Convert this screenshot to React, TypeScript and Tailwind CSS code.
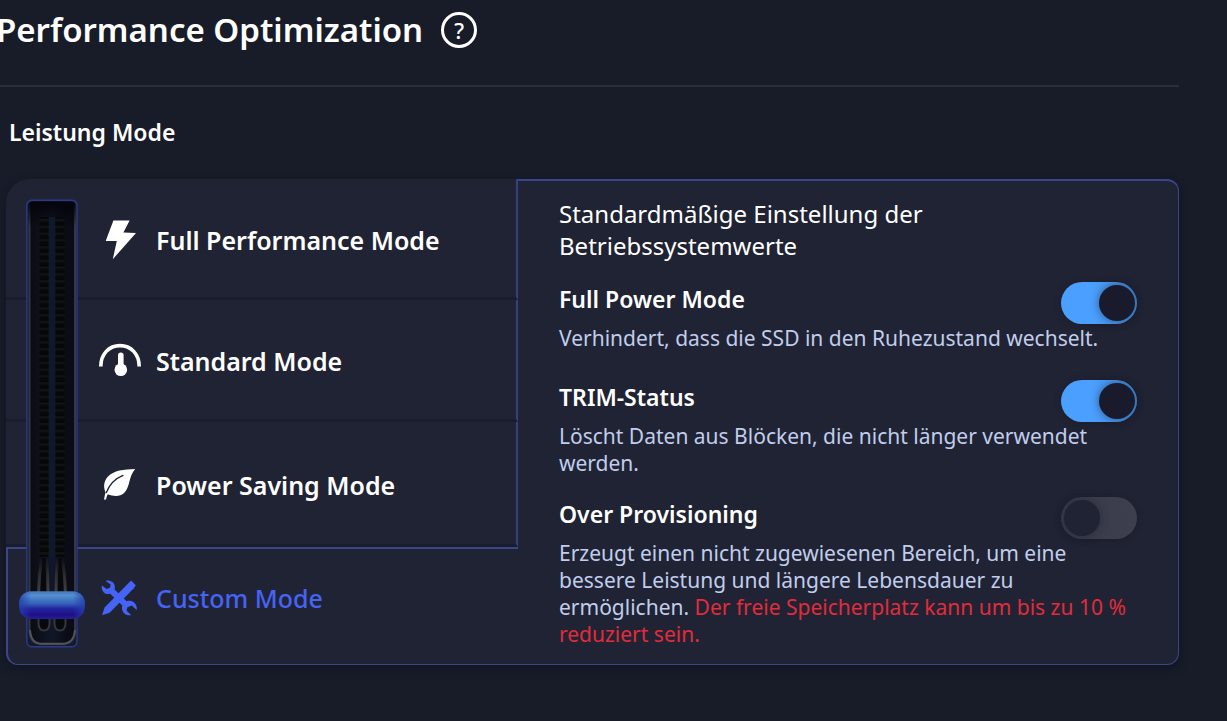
import { useState, type ReactNode } from "react";

function BoltIcon() {
  return (
    <svg viewBox="99 220 42 42" className="size-[42px] shrink-0" fill="currentColor" aria-hidden="true">
      <path d="M113.4 221.5H129.6L123.4 233.4L136 234L112.8 260.2L116.8 242H105.7Z" />
    </svg>
  );
}

function GaugeIcon() {
  return (
    <svg viewBox="99 342 42 42" className="size-[42px] shrink-0" aria-hidden="true">
      <path d="M100.8 368.6C100.8 356 109 347.6 120 347.6S139.2 356 139.2 368.6" fill="none" stroke="currentColor" strokeWidth="3.6" />
      <path d="M120.8 357.4V371" stroke="currentColor" strokeWidth="5.6" strokeLinecap="round" />
      <circle cx="120.8" cy="371.8" r="6.3" fill="currentColor" />
    </svg>
  );
}

function LeafIcon() {
  return (
    <svg viewBox="99 463 42 42" className="size-[42px] shrink-0" aria-hidden="true">
      <path
        d="M135.2 468C124 468.2 113.5 469.6 108 475.6C103.6 480.4 103.2 486 105.6 491.4C104.8 493.8 104.2 496.4 104.2 498.8L106 498.6C106.3 496.6 106.9 495 107.8 493.2C114.5 496 121.5 495.4 125 491C130.4 484.4 128.4 476 135.2 468Z"
        fill="currentColor"
      />
      <path d="M106.4 491.6C109.4 483.6 115.2 477.6 123 474.4" fill="none" stroke="#202333" strokeWidth="1.3" strokeLinecap="round" />
    </svg>
  );
}

function ToolsIcon() {
  return (
    <svg viewBox="98 576 44 44" className="-mx-px size-11 shrink-0" fill="currentColor" aria-hidden="true">
      <path d="M105.6 580.9C109.6 579.6 114.3 582 114.8 586.2C115 587.6 114.8 588.6 114.6 589.5L126.6 601.3C131 599.6 136 602.6 136.7 607.3C136.9 608.3 136.8 609.2 136.6 610L131.8 605.6L127.4 607.2L126.6 610.8L131.2 615C126.6 616.2 122 613 122 608.2C122 607.2 122.1 606.4 122.3 605.5L110.2 593.8C106 595 102.2 592.2 101.8 588.2C101.7 587.2 101.8 586.4 102 585.6L106.6 589L110 587.8L110.6 584.6Z" />
      <path d="M131.2 580.6L135.8 585.2L133.6 588.6L109.6 612.8L102 615.2L104.6 607.4L128.6 583Z" />
    </svg>
  );
}

const modes: { name: string; icon: ReactNode }[] = [
  { name: "Full Performance Mode", icon: <BoltIcon /> },
  { name: "Standard Mode", icon: <GaugeIcon /> },
  { name: "Power Saving Mode", icon: <LeafIcon /> },
  { name: "Custom Mode", icon: <ToolsIcon /> },
];

function SliderDrawing() {
  return (
    <svg viewBox="16 196 74 456" className="h-[456px] w-[74px]" aria-hidden="true">
      <defs>
        <linearGradient id="groove" x1="0" x2="1">
          <stop offset="0" stopColor="#0a0b12" />
          <stop offset="0.2" stopColor="#0d101a" />
          <stop offset="0.5" stopColor="#11172a" />
          <stop offset="0.8" stopColor="#0b0c16" />
          <stop offset="1" stopColor="#0c0a15" />
        </linearGradient>
        <linearGradient id="knob" x1="0" x2="0" y1="0" y2="1">
          <stop offset="0" stopColor="#4576bc" />
          <stop offset="0.15" stopColor="#548fd0" />
          <stop offset="0.45" stopColor="#3560b8" />
          <stop offset="0.62" stopColor="#22269e" />
          <stop offset="0.84" stopColor="#200e88" />
          <stop offset="1" stopColor="#25208f" />
        </linearGradient>
        <linearGradient id="knobSides">
          <stop offset="0" stopColor="#2440ac" stopOpacity="0.85" />
          <stop offset="0.18" stopColor="#2440ac" stopOpacity="0" />
          <stop offset="0.82" stopColor="#2440ac" stopOpacity="0" />
          <stop offset="1" stopColor="#2440ac" stopOpacity="0.85" />
        </linearGradient>
        <linearGradient id="cable" x1="0" x2="0" y1="0" y2="1">
          <stop offset="0" stopColor="#3c3c3e" stopOpacity="0" />
          <stop offset="0.5" stopColor="#3c3c3e" stopOpacity="0.7" />
          <stop offset="1" stopColor="#46423f" />
        </linearGradient>
        <linearGradient id="topShade" x1="0" x2="0" y1="0" y2="1">
          <stop offset="0" stopColor="#030409" />
          <stop offset="1" stopColor="#030409" stopOpacity="0" />
        </linearGradient>
        <pattern id="beads" x="0" y="217" width="60" height="6.8" patternUnits="userSpaceOnUse">
          <rect width="60" height="6.8" fill="#050708" />
          <rect y="2" width="60" height="2.4" fill="#101314" />
        </pattern>
      </defs>
      <rect x="26.8" y="200.3" width="50.2" height="446.4" rx="5" fill="#141a30" stroke="#2b3a8c" strokeWidth="1.4" />
      <path d="M29.5 205V630Q29.5 644 42 644H62Q75 644 75 630V205" fill="url(#groove)" stroke="#343941" strokeWidth="2" />
      <rect x="28.2" y="201.5" width="47.6" height="26" rx="5" fill="url(#topShade)" />
      <rect x="39.5" y="217" width="9" height="340" fill="url(#beads)" />
      <rect x="55.5" y="217" width="9" height="340" fill="url(#beads)" />
      <rect x="49" y="217" width="6" height="340" fill="#11182a" />
      <path d="M42 558L40 594H48L46 558ZM58 558L56 594H64L62 558Z" fill="#07090c" />
      <g fill="none" stroke="url(#cable)" strokeWidth="3">
        <path d="M41.5 558Q39 576 38.5 594" />
        <path d="M46.5 558Q48 576 48 594" />
        <path d="M57.5 558Q56 576 56 594" />
        <path d="M62.5 558Q65 576 65.5 594" />
      </g>
      <g fill="#08090d" stroke="#35373c" strokeWidth="2">
        <path d="M38.5 617V624Q39 630.5 44 630.5T49.5 624V617" />
        <path d="M54.5 617V624Q55 630.5 60 630.5T65.5 624V617" />
      </g>
      <path d="M30 630Q31 643.8 42 643.8H62Q74 643.8 75 630" fill="none" stroke="#52545a" strokeWidth="2" />
      <rect x="19.3" y="591.3" width="65.4" height="27.7" rx="12" fill="url(#knob)" />
      <rect x="19.3" y="591.3" width="65.4" height="27.7" rx="12" fill="url(#knobSides)" />
    </svg>
  );
}

function Toggle({ id, checked, onChange }: { id: string; checked: boolean; onChange: () => void }) {
  return (
    <input
      id={id}
      type="checkbox"
      role="switch"
      checked={checked}
      onChange={onChange}
      className="flex h-[42px] w-[76px] shrink-0 cursor-pointer appearance-none items-center rounded-full bg-linear-to-r from-[#393b4a] to-[#3d3f4e] px-[3px] shadow-[0_1px_6px_rgba(20,22,34,0.4)] before:size-9 before:rounded-full before:bg-[#202333] before:shadow-[0_0_8px_rgba(24,26,40,0.5)] checked:justify-end checked:from-[#4ba0ff] checked:from-40% checked:to-[#428cdf] checked:px-[2px] checked:before:bg-[#191b2c]"
    />
  );
}

const settings = [
  { id: "full-power", title: "Full Power Mode", text: "Verhindert, dass die SSD in den Ruhezustand wechselt.", warning: "" },
  { id: "trim", title: "TRIM-Status", text: "Löscht Daten aus Blöcken, die nicht länger verwendet werden.", warning: "" },
  {
    id: "over-provisioning",
    title: "Over Provisioning",
    text: "Erzeugt einen nicht zugewiesenen Bereich, um eine bessere Leistung und längere Lebensdauer zu ermöglichen.",
    warning: "Der freie Speicherplatz kann um bis zu 10 % reduziert sein.",
  },
];

export default function App() {
  const [mode, setMode] = useState(3);
  const [enabled, setEnabled] = useState([true, true, false]);

  return (
    <main className="min-h-screen overflow-x-hidden bg-[#181c28] pr-12 pb-14 font-['Noto_Sans',sans-serif] text-white">
      <header className="flex items-center gap-[18px] border-b-2 border-[#2d2d3a] pt-[9px] pb-[35px]">
        <h1 className="-ml-1 text-[33px] leading-[41px] font-semibold whitespace-nowrap">Performance Optimization</h1>
        <button type="button" aria-label="Help" className="flex size-9 items-center justify-center rounded-full border-[3px] border-white text-[22px] leading-6 font-medium">
          ?
        </button>
      </header>

      <h2 className="mt-[29px] mb-[31px] ml-[9px] text-[23px] leading-8 font-semibold">Leistung Mode</h2>

      <section className="relative ml-[6px] grid grid-cols-[512fr_661fr] rounded-tl-[24px] rounded-r-[12px] rounded-bl-[12px] bg-[#202333] shadow-[0_3px_8px_rgba(16,18,28,0.7)]">
        <div className="grid grid-rows-[121fr_122fr_125fr_118fr]">
          {modes.map((m, i) => {
            const last = i === modes.length - 1;
            return (
              <button
                key={m.name}
                type="button"
                aria-pressed={mode === i}
                onClick={() => setMode(i)}
                className={
                  "flex cursor-pointer items-center gap-[15px] text-left text-[25px] leading-8 " +
                  (last
                    ? "rounded-bl-[12px] border-t-2 border-b border-l-2 border-[#3a468c] pb-[18px] pl-[91px] "
                    : "border-r-2 border-b-[3px] border-r-[#35427f] border-b-[#1a1d2b] pt-[3px] pl-[93px] ") +
                  (mode === i ? "font-medium text-[#4563f5]" : "font-semibold text-white")
                }
              >
                {m.icon}
                {m.name}
              </button>
            );
          })}
        </div>

        <div className="flex flex-col gap-5 rounded-r-[12px] border-t-2 border-r border-b border-[#3a468c] pt-[17px] pr-[41px] pb-[16px] pl-[41px]">
          <p className="max-w-[440px] text-[24px] leading-8">Standardmäßige Einstellung der Betriebssystemwerte</p>
          {settings.map((s, i) => (
            <div key={s.id} className="min-h-[78px]">
              <div className="flex items-start justify-between">
                <label htmlFor={s.id} className="text-[23px] leading-[34px] font-semibold">
                  {s.title}
                </label>
                <Toggle id={s.id} checked={enabled[i]} onChange={() => setEnabled(enabled.map((v, j) => (j === i ? !v : v)))} />
              </div>
              <p className="pt-px text-[21px] leading-[27px] text-[#c0cdec]">
                {s.text} {s.warning && <span className="text-[#e02c3c]">{s.warning}</span>}
              </p>
            </div>
          ))}
        </div>

        <div className="absolute top-[17px] left-[10px]">
          <SliderDrawing />
          <input
            type="range"
            aria-label="Leistung Mode"
            min={0}
            max={3}
            value={3 - mode}
            onChange={(e) => setMode(3 - Number(e.target.value))}
            className="absolute inset-0 h-full w-full cursor-pointer opacity-0 [writing-mode:vertical-lr] [direction:rtl]"
          />
        </div>
      </section>
    </main>
  );
}
